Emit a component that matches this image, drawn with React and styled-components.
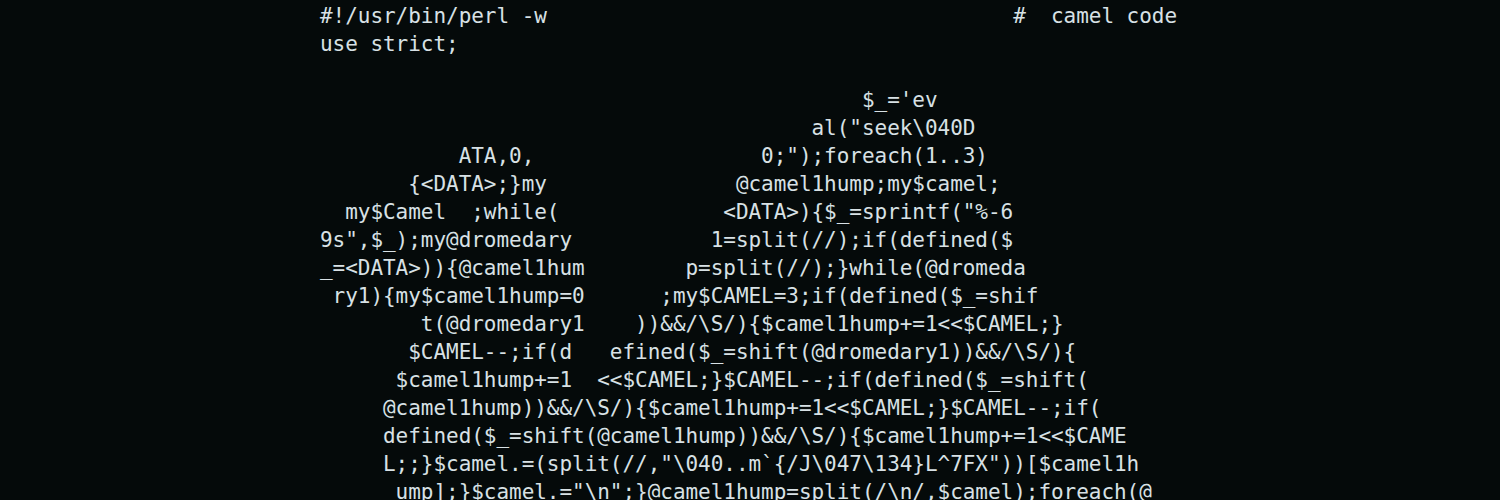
import { createGlobalStyle } from 'styled-components'
import styled from 'styled-components'

const GlobalStyle = createGlobalStyle`
  html, body {
    margin: 0;
    padding: 0;
    background: #050a0a;
    height: 100%;
    overflow: hidden;
  }
`;

const Screen = styled.main`
  display: flex;
  justify-content: center;
  height: 500px;
  overflow: hidden;
  background: #050a0a;
`;

const Code = styled.pre`
  width: 860px;
  margin: 0;
  padding: 2px 0 0 0;
  font-family: "DejaVu Sans Mono", "Liberation Mono", monospace;
  font-size: 21px;
  line-height: 28px;
  letter-spacing: -0.04px;
  color: #d8e1e5;
  white-space: pre;
`;

const Line = styled.div`
  height: 28px;
`;

// camel code, column positions read from the screenshot
const lines = [
  '#!/usr/bin/perl -w                                     #  camel code',
  'use strict;',
  '',
  '                                           $_=\'ev',
  '                                       al("seek\\040D',
  '           ATA,0,                  0;");foreach(1..3)',
  '       {<DATA>;}my               @camel1hump;my$camel;',
  '  my$Camel  ;while(             <DATA>){$_=sprintf("%-6',
  '9s",$_);my@dromedary           1=split(//);if(defined($',
  '_=<DATA>)){@camel1hum        p=split(//);}while(@dromeda',
  ' ry1){my$camel1hump=0      ;my$CAMEL=3;if(defined($_=shif',
  '        t(@dromedary1    ))&&/\\S/){$camel1hump+=1<<$CAMEL;}',
  '       $CAMEL--;if(d   efined($_=shift(@dromedary1))&&/\\S/){',
  '      $camel1hump+=1  <<$CAMEL;}$CAMEL--;if(defined($_=shift(',
  '     @camel1hump))&&/\\S/){$camel1hump+=1<<$CAMEL;}$CAMEL--;if(',
  '     defined($_=shift(@camel1hump))&&/\\S/){$camel1hump+=1<<$CAME',
  '     L;;}$camel.=(split(//,"\\040..m`{/J\\047\\134}L^7FX"))[$camel1h',
  '      ump];}$camel.="\\n";}@camel1hump=split(/\\n/,$camel);foreach(@',
]

export default function App() {
  return (
    <>
      <GlobalStyle />
      <Screen>
        <Code>
          {lines.map((l, i) => (
            <Line key={i}>{l}</Line>
          ))}
        </Code>
      </Screen>
    </>
  )
}
